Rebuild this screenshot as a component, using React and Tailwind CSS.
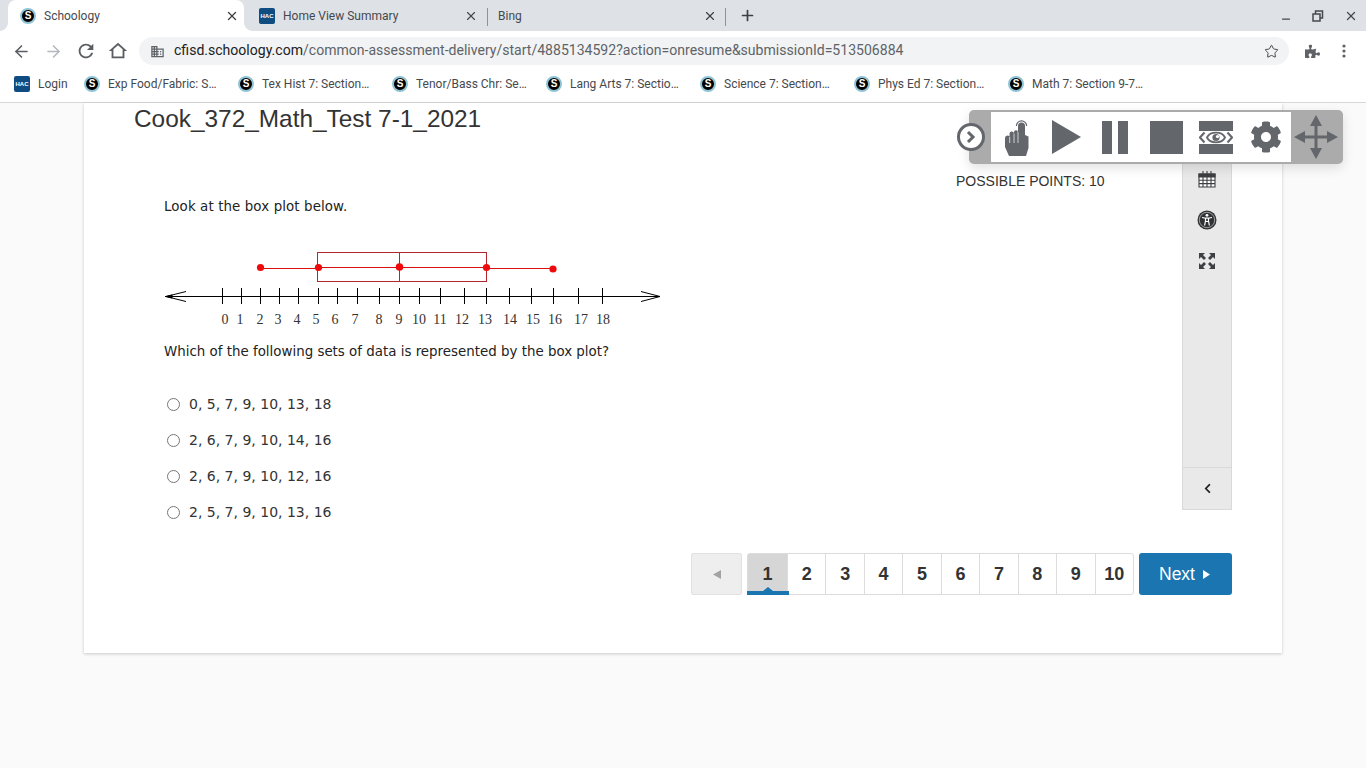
import React from 'react';
import { ArrowLeft, ArrowRight, Star, X, Plus, Minus } from 'lucide-react';
import { FaCog, FaChevronLeft, FaPuzzlePiece } from 'react-icons/fa';

const S = () => (
  <span className="w-[16px] h-[16px] rounded-full bg-black border-2 border-[#8fc3d6] flex items-center justify-center text-white text-[10px] font-bold leading-none shrink-0 font-['Liberation_Sans',sans-serif]">S</span>
);
const Hac = () => (
  <span className="w-[16px] h-[16px] rounded-[2px] bg-[#0f4c81] flex items-center justify-center text-white text-[6px] font-bold leading-none shrink-0 font-['Liberation_Sans',sans-serif]">HAC</span>
);

const bookmarks = [
  'Exp Food/Fabric: S…',
  'Tex Hist 7: Section…',
  'Tenor/Bass Chr: Se…',
  'Lang Arts 7: Sectio…',
  'Science 7: Section…',
  'Phys Ed 7: Section…',
  'Math 7: Section 9-7…',
];

function Chrome() {
  return (
    <div className="font-['Roboto',sans-serif] shrink-0">
      <div className="h-[31px] bg-[#dee1e6] flex items-end pl-[8px] text-[12px] text-[#3c4043]">
        <div className="w-[236px] h-[31px] bg-white rounded-t-[8px] flex items-center pl-[12px] pr-[5px] gap-[8px] text-[#45494d] relative">
          <span className="absolute left-[-8px] bottom-0 w-[8px] h-[8px] bg-[radial-gradient(circle_at_0_0,#dee1e6_7.5px,#ffffff_8px)]" />
          <span className="absolute right-[-8px] bottom-0 w-[8px] h-[8px] bg-[radial-gradient(circle_at_100%_0,#dee1e6_7.5px,#ffffff_8px)]" />
          <S /><span className="flex-1">Schoology</span><X size={14} strokeWidth={2.2} className="text-[#3c4043]" />
        </div>
        <div className="w-[243px] h-[31px] flex items-center pl-[15px] pr-[9px] gap-[8px] text-[#45494d]">
          <Hac /><span className="flex-1">Home View Summary</span><X size={14} strokeWidth={2} />
        </div>
        <div className="w-[239px] h-[31px] flex items-center pl-[11px] pr-[9px] relative">
          <span className="absolute left-0 top-[8px] w-px h-[18px] bg-[#8f9296]" />
          <span className="flex-1 text-[#45494d]">Bing</span><X size={14} strokeWidth={2} />
          <span className="absolute right-0 top-[8px] w-px h-[18px] bg-[#8f9296]" />
        </div>
        <div className="h-[31px] flex items-center ml-[13px]"><Plus size={17} strokeWidth={2.4} className="text-[#3c4043]" /></div>
        <div className="flex-1" />
        <div className="h-[31px] flex items-center gap-[20px] pr-[8px] text-[#45494d]">
          <Minus size={12} strokeWidth={2.5} className="mt-[6px]" />
          <svg width="12" height="12" viewBox="0 0 12 12" fill="none" stroke="currentColor" strokeWidth="1.5"><rect x="3.5" y="1" width="7" height="7" /><rect x="1" y="4" width="7" height="7" fill="#dee1e6" /></svg>
          <X size={14} strokeWidth={2.2} />
        </div>
      </div>
      <div className="h-[40px] bg-white flex items-center pl-[12px] pr-[13px] text-[#5f6368]">
        <ArrowLeft size={19} strokeWidth={2} className="text-[#5a5e63]" />
        <ArrowRight size={19} strokeWidth={2} className="ml-[13px] text-[#b5b8bc]" />
        <svg width="22" height="22" viewBox="0 0 24 24" fill="#5a5e63" className="ml-[12px]"><path d="M17.65 6.35A7.958 7.958 0 0012 4c-4.42 0-7.99 3.58-7.99 8s3.57 8 7.99 8c3.73 0 6.84-2.55 7.73-6h-2.08A5.99 5.99 0 0112 18c-3.31 0-6-2.69-6-6s2.69-6 6-6c1.66 0 3.14.69 4.22 1.78L13 11h7V4l-2.35 2.35z" /></svg>
        <svg width="22" height="22" viewBox="0 0 24 24" fill="#5a5e63" fillRule="evenodd" className="ml-[10px]"><path d="M12 5.7l5 4.5V18H7v-7.8l5-4.5M12 3L2 12h3v8h14v-8h3z" /></svg>
        <div className="ml-[10px] h-[28px] w-[1150px] bg-[#f1f3f4] rounded-full flex items-center pl-[11px] pr-[10px] text-[14.05px]">
          <svg width="15" height="15" viewBox="0 0 24 24" fill="#5f6368"><path d="M12 7V3H2v18h20V7H12zM6 19H4v-2h2v2zm0-4H4v-2h2v2zm0-4H4V9h2v2zm0-4H4V5h2v2zm4 12H8v-2h2v2zm0-4H8v-2h2v2zm0-4H8V9h2v2zm0-4H8V5h2v2zm10 12h-8v-2h2v-2h-2v-2h2v-2h-2V9h8v10zm-2-8h-2v2h2v-2zm0 4h-2v2h2v-2z" /></svg>
          <span className="ml-[9px] flex-1"><span className="text-[#202124]">cfisd.schoology.com</span><span className="text-[#5f6368]">/common-assessment-delivery/start/4885134592?action=onresume&amp;submissionId=513506884</span></span>
          <Star size={15} strokeWidth={1.6} className="text-[#45494d]" />
        </div>
        <FaPuzzlePiece size={15} className="ml-[16px] text-[#5f6368]" />
        <svg width="4" height="14" viewBox="0 0 4 14" className="ml-[22px] text-[#5f6368]" fill="currentColor"><circle cx="2" cy="2" r="1.6" /><circle cx="2" cy="7" r="1.6" /><circle cx="2" cy="12" r="1.6" /></svg>
      </div>
      <div className="h-[32px] bg-white border-b border-[#d5d7da] flex items-center pl-[14px] pb-[5px] text-[12px] text-[#45494d]">
        <Hac /><span className="ml-[8px] w-[46px]">Login</span>
        {bookmarks.map((t) => (
          <div key={t} className="flex items-center w-[154px]"><S /><span className="ml-[8px] whitespace-nowrap">{t}</span></div>
        ))}
      </div>
    </div>
  );
}

function Plot() {
  const ticks = [222, 241, 260, 279, 298, 318, 337, 357, 379, 399, 419, 440, 464, 486, 509, 531, 553, 578, 602];
  const labels = [225, 240, 260, 278, 297, 316, 335, 355, 379, 399, 419, 440, 462, 485, 510, 533, 555, 581, 603];
  return (
    <svg width="510" height="90" viewBox="160 240 510 90" className="block">
      <g stroke="#000" strokeWidth="1" fill="none">
        <path d="M165 296.5H660" />
        <path d="M186 291.5L166 296.5L186 301.5M641 291.5L660 296.5L641 301.5" />
        <path d="M166 296.5L172 295V298z" fill="#000" />
        {ticks.map((x) => <path key={x} d={`M${x + 0.5} 288V304`} />)}
      </g>
      <g stroke="#b5252c" strokeWidth="1" fill="none">
        <rect x="317.5" y="252.5" width="169" height="29" />
        <path d="M399.5 252.5V281.5" />
      </g>
      <g stroke="#d81010" strokeWidth="1" fill="none">
        <path d="M261 268.5H318M318 267.5H486M486 268.5H553" />
      </g>
      <g fill="#ee0a0a">
        <circle cx="260.5" cy="267.5" r="3.6" />
        <circle cx="318.5" cy="267.5" r="3.6" />
        <circle cx="399.5" cy="267" r="3.8" />
        <circle cx="486.5" cy="267.5" r="3.6" />
        <circle cx="553" cy="269" r="3.6" />
      </g>
      <g fontFamily="'Liberation Serif', serif" fontSize="14" fill="#333" textAnchor="middle">
        {labels.map((x, i) => <text key={i} x={x} y="323.5">{i}</text>)}
      </g>
    </svg>
  );
}

function Radio({ label }) {
  return (
    <div className="flex items-center h-[36px]">
      <span className="w-[13px] h-[13px] rounded-full border border-[#767676] bg-white ml-[3px]" />
      <span className="ml-[9px] text-[14px] text-[#333]">{label}</span>
    </div>
  );
}

function ToolIcons() {
  const c = '#63666b';
  return (
    <div className="absolute left-[957px] top-[7px] w-[386px] h-[54px] z-10 flex items-center">
      <span className="absolute left-0 top-[13px] w-[28px] h-[28px] rounded-full bg-white border-[3px] border-[#63666b] z-20 flex items-center justify-center">
        <svg width="12" height="14" viewBox="0 0 12 14" fill="none" stroke="#63666b" strokeWidth="3"><path d="M3 2l5 5-5 5" /></svg>
      </span>
      <div className="ml-[12px] w-[374px] h-[54px] bg-[#ababab] rounded-[5px] flex items-center pl-[22px] shadow-[0_4px_12px_rgba(0,0,0,0.12)]">
        <div className="w-[300px] h-[50px] bg-white flex items-center">
          <svg width="24" height="37" viewBox="0 0 24 37" className="ml-[14px]" fill={c}>
            <path d="M13 7a3.5 3.5 0 0 1 7 0V16l3.5 1.5V29L21 37H4L0 28V19a2.4 2.4 0 0 1 4.5-1.2V15a2.3 2.3 0 0 1 4.5-.8V13.5a2 2 0 0 1 4-.3z" />
            <path d="M4.7 18v6M9 14.5V24M13 13v11" stroke="#fff" strokeWidth="0.7" fill="none" />
            <path d="M11.4 7a5.1 5.1 0 0 1 10.2 0" stroke={c} strokeWidth="1.2" fill="none" />
          </svg>
          <svg width="29" height="34" viewBox="0 0 29 34" className="ml-[23px]" fill={c}><path d="M0 0L29 17L0 34z" /></svg>
          <svg width="26" height="33" viewBox="0 0 26 33" className="ml-[21px]" fill={c}><path d="M0 0h10v33H0zM16 0h10v33H16z" /></svg>
          <svg width="33" height="33" viewBox="0 0 33 33" className="ml-[22px]" fill={c}><path d="M0 0h33v33H0z" /></svg>
          <svg width="34" height="33" viewBox="0 0 34 33" className="ml-[16px]" fill={c}>
            <path d="M0 0h34v10H0zM0 23h34v10H0z" />
            <path d="M5.5 11.5L1 16.5L5.5 21.5M28.5 11.5L33 16.5L28.5 21.5" fill="none" stroke={c} strokeWidth="2" />
            <path d="M8 16.5C11 10 23 10 26 16.5C23 23 11 23 8 16.5z" fill="none" stroke={c} strokeWidth="1.8" />
            <circle cx="17" cy="16.5" r="3.6" />
            <circle cx="18.5" cy="15.6" r="1.6" fill="#fff" />
          </svg>
          <FaCog size={32} color={c} className="ml-[17px]" />
        </div>
        <svg width="44" height="44" viewBox="0 0 44 44" className="ml-[3px]" fill={c}>
          <path d="M22 0L28 11H16zM22 44L16 33H28zM0 22L11 16V28zM44 22L33 28V16z" />
          <path d="M20.5 10h3v24h-3zM10 20.5h24v3H10z" />
        </svg>
      </div>
    </div>
  );
}

function Rail() {
  const c = '#3d4043';
  return (
    <div className="w-[50px] h-[347px] mt-[60px] bg-[#e9e9e9] border-x border-b border-[#d9d9d9] flex flex-col items-center">
      <div className="flex-1 flex flex-col items-center pt-[7px] gap-[22px]">
        <svg width="18" height="18" viewBox="0 0 18 18" fill="none" stroke={c} strokeWidth="1.1">
          <path d="M1 4h16v13H1z" fill="#fff" /><path d="M1 4h16v3H1z" fill={c} />
          <path d="M5 1v3M9 1v3M13 1v3M1 10.3h16M1 13.6h16M5 7v10M9 7v10M13 7v10" />
        </svg>
        <svg width="20" height="20" viewBox="0 0 20 20">
          <circle cx="10" cy="10" r="9.5" fill="#2f3133" /><circle cx="10" cy="10" r="7.7" fill="none" stroke="#e9e9e9" strokeWidth="0.6" />
          <circle cx="10" cy="5.3" r="1.4" fill="#fff" />
          <path d="M5 7.5L8.5 8.2V11L7.6 15.5M15 7.5L11.5 8.2V11L12.4 15.5M8.5 8.2H11.5M8.8 11.5H11.2" stroke="#fff" strokeWidth="1.2" fill="none" />
        </svg>
        <svg width="18" height="18" viewBox="0 0 18 18" fill={c}>
          <path d="M1 1h6L5 3l3 3-2 2-3-3-2 2zM17 1v6l-2-2-3 3-2-2 3-3-2-2zM1 17v-6l2 2 3-3 2 2-3 3 2 2zM17 17h-6l2-2-3-3 2-2 3 3 2-2z" />
        </svg>
      </div>
      <div className="w-full h-[42px] border-t border-[#d9d9d9] flex items-center justify-center">
        <FaChevronLeft size={11} color="#222" />
      </div>
    </div>
  );
}

function Pager() {
  const pages = [2, 3, 4, 5, 6, 7, 8, 9, 10];
  return (
    <div className="flex justify-end h-[42px] font-['Liberation_Sans',sans-serif]">
      <div className="w-[51px] h-[42px] bg-[#eeeeee] border border-[#e2e2e2] rounded-[2px] flex items-center justify-center">
        <svg width="8" height="9" viewBox="0 0 8 9" fill="#a3a3a3"><path d="M8 0v9L0 4.5z" /></svg>
      </div>
      <div className="ml-[5px] flex h-[42px] w-[387px] border border-[#dcdcdc] rounded-[3px] bg-white text-[18px] font-bold text-[#333] relative">
        <div className="w-[39px] bg-[#d6d6d6] flex items-center justify-center relative">1</div>
        {pages.map((p) => (
          <div key={p} className="flex-1 border-l border-[#dcdcdc] flex items-center justify-center first:border-l-0">{p}</div>
        ))}
        <span className="absolute left-[-1px] bottom-[-1px] w-[42px] h-[4px] bg-[#1a75b0]" />
        <span className="absolute left-[15px] bottom-[3px] w-0 h-0 border-x-[5px] border-x-transparent border-b-[4px] border-b-[#1a75b0]" />
      </div>
      <div className="ml-[5px] w-[93px] h-[42px] bg-[#1a75b0] rounded-[3px] flex items-center justify-center gap-[8px] pr-[2px] text-white text-[17.5px]">
        Next
        <svg width="7" height="9" viewBox="0 0 7 9" fill="#fff"><path d="M0 0v9l7-4.5z" /></svg>
      </div>
    </div>
  );
}

export default function App() {
  return (
    <div className="w-[1366px] h-[768px] overflow-hidden flex flex-col bg-[#fafafa]">
      <Chrome />
      <main className="relative flex-1 flex flex-col">
        <ToolIcons />
        <div className="ml-[84px] w-[1198px] h-[550px] bg-white shadow-[0_1px_3px_rgba(0,0,0,0.2)] flex flex-col pr-[50px] pl-[50px]">
          <div className="flex flex-1 min-h-0">
            <div className="flex-1 min-w-0">
              <h1 className="font-['Liberation_Sans',sans-serif] text-[24.4px] leading-[30px] text-[#333] mt-[1px]">Cook_372_Math_Test 7-1_2021</h1>
              <div className="pl-[30px] font-['DejaVu_Sans',sans-serif] text-[13.4px] text-[#222]">
                <p className="mt-[63px] leading-[20px] tracking-[0.1px]">Look at the box plot below.</p>
                <div className="-ml-[4px] mt-[23px]"><Plot /></div>
                <p className="mt-[12px] leading-[20px]">Which of the following sets of data is represented by the box plot?</p>
                <div className="mt-[24px]">
                  {['0, 5, 7, 9, 10, 13, 18', '2, 6, 7, 9, 10, 14, 16', '2, 6, 7, 9, 10, 12, 16', '2, 5, 7, 9, 10, 13, 16'].map((l) => <Radio key={l} label={l} />)}
                </div>
              </div>
            </div>
            <div className="flex">
              <div className="w-[226px] font-['Liberation_Sans',sans-serif] text-[14px] text-[#333] pt-[68px]">POSSIBLE POINTS: 10</div>
              <Rail />
            </div>
          </div>
          <div className="mb-[58px]"><Pager /></div>
        </div>
      </main>
    </div>
  );
}
